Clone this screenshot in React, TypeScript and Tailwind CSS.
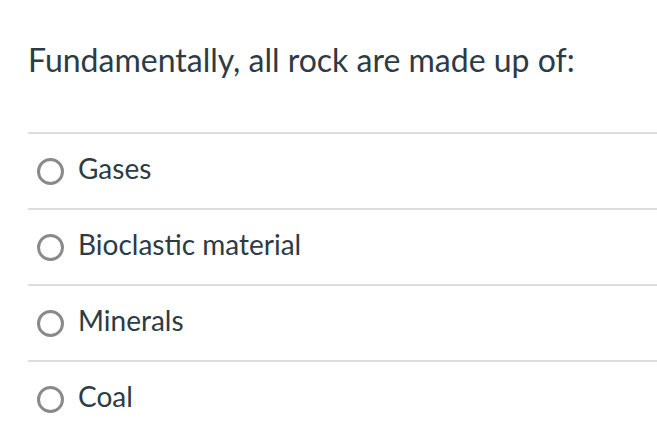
const options = ["Gases", "Bioclastic material", "Minerals", "Coal"];

export default function App() {
  return (
    <div className="min-h-screen w-full bg-white text-[#2d3b45]" style={{ fontFamily: "Lato, 'Open Sans', sans-serif" }}>
      <div className="pl-[28px] pt-[38px]">
        <h1 className="text-[32px] leading-[44px] font-normal">Fundamentally, all rock are made up of:</h1>
        <div className="mt-[50px]">
          {options.map((o) => (
            <div key={o} className="border-t-2 border-[#dddddd] h-[76px] flex items-center">
              <span className="ml-[9px] w-[27px] h-[27px] rounded-full border-[3px] border-[#8a8a8a] shrink-0" />
              <span className="ml-[14px] text-[28px] leading-[34px] mb-[7px]">{o}</span>
            </div>
          ))}
        </div>
      </div>
    </div>
  );
}
